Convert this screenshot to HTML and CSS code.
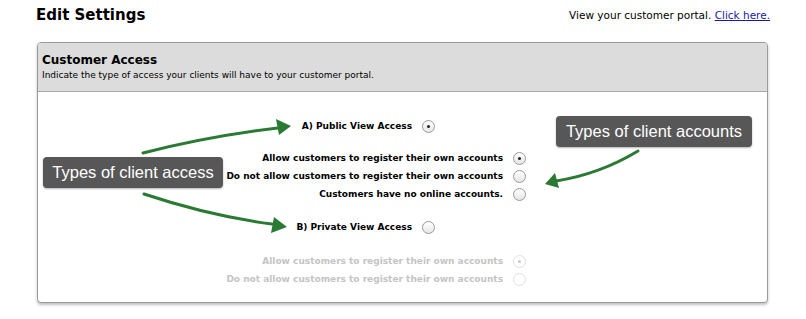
FILE: index.html
```html
<!DOCTYPE html>
<html>
<head>
<meta charset="utf-8">
<link rel="stylesheet" href="styles.css">
</head>
<body>
<div class="page">
  <header class="top">
    <h1 class="title">Edit Settings</h1>
    <p class="portal">View your customer portal. <a href="#">Click here.</a></p>
  </header>
  <section class="panel">
    <div class="panel-head">
      <h2>Customer Access</h2>
      <p>Indicate the type of access your clients will have to your customer portal.</p>
    </div>
    <div class="panel-body">
      <div class="row group first"><span class="lbl">A) Public View Access</span><span class="radio on"></span></div>
      <div class="options">
        <div class="row opt"><span class="lbl">Allow customers to register their own accounts</span><span class="radio on"></span></div>
        <div class="row opt"><span class="lbl">Do not allow customers to register their own accounts</span><span class="radio"></span></div>
        <div class="row opt"><span class="lbl">Customers have no online accounts.</span><span class="radio"></span></div>
      </div>
      <div class="row group second"><span class="lbl">B) Private View Access</span><span class="radio"></span></div>
      <div class="options disabled">
        <div class="row opt"><span class="lbl">Allow customers to register their own accounts</span><span class="radio on"></span></div>
        <div class="row opt"><span class="lbl">Do not allow customers to register their own accounts</span><span class="radio"></span></div>
      </div>
    </div>
  </section>

  <svg class="arrows" width="806" height="319" viewBox="0 0 806 319">
    <g fill="none" stroke="#2a7a34" stroke-width="3" stroke-linecap="round">
      <path d="M143 153 Q210 136 278 128"/>
      <path d="M144 194 Q210 216 272 224"/>
      <path d="M638 151 Q600 174 556 181"/>
    </g>
    <g fill="#2a7a34">
      <path d="M291 126 L276 119 L279 135 Z"/>
      <path d="M287 227 L274 217 L271 233 Z"/>
      <path d="M545 184 L555 173 L559 188 Z"/>
    </g>
  </svg>
  <div class="callout access">Types of client access</div>
  <div class="callout accounts">Types of client accounts</div>
</div>
</body>
</html>
```
FILE: styles.css
```css
html, body { margin: 0; padding: 0; background: #fff; }
.page {
  position: relative;
  width: 806px;
  height: 319px;
  overflow: hidden;
  font-family: "DejaVu Sans", Verdana, sans-serif;
  color: #000;
}
.top {
  display: flex;
  justify-content: space-between;
  align-items: flex-start;
  padding: 5px 36px 0 36px;
  height: 37px;
}
.title {
  margin: 0;
  font-size: 15px;
  font-weight: bold;
  line-height: 20px;
}
.portal {
  margin: 3px 0 0 0;
  font-size: 10.5px;
  line-height: 14px;
}
.portal a { color: #1a1aa6; }
.panel {
  margin-left: 37px;
  width: 729px;
  height: 259px;
  border: 1px solid #9a9a9a;
  border-radius: 4px;
  box-shadow: 0 2px 3px rgba(0,0,0,0.25);
  overflow: hidden;
  background: #fff;
}
.panel-head {
  background: #dcdcdc;
  border-bottom: 1px solid #a8a8a8;
  padding: 9px 4px 0 4px;
  height: 39px;
}
.panel-head h2 {
  margin: 0;
  font-size: 12px;
  line-height: 16px;
  font-weight: bold;
}
.panel-head p {
  margin: 1px 0 0 0;
  font-size: 9px;
  line-height: 13px;
}
.panel-body { padding-top: 25px; }
.row {
  display: flex;
  justify-content: flex-end;
  align-items: center;
  font-size: 9px;
  font-weight: bold;
  height: 18px;
}
.row .lbl { margin-right: 10px; }
.group { width: 397px; }
.opt { width: 488px; }
.first { margin-bottom: 14px; }
.options { margin-bottom: 15px; }
.second { margin-bottom: 16px; }
.radio {
  width: 11px;
  height: 11px;
  border-radius: 50%;
  border: 1px solid #9a9a9a;
  background: linear-gradient(#ffffff, #e6e6e6);
  position: relative;
  flex: none;
}
.radio.on::after {
  content: "";
  position: absolute;
  left: 4px;
  top: 4px;
  width: 3px;
  height: 3px;
  border-radius: 50%;
  background: #222;
}
.disabled .row { color: #c4c4c4; }
.disabled .radio { border-color: #e0e0e0; background: #fff; }
.disabled .radio.on::after { background: #c8c8c8; }
.arrows { position: absolute; left: 0; top: 0; }
.callout {
  position: absolute;
  background: #575757;
  color: #fff;
  border-radius: 4px;
  font-family: "Liberation Sans", Arial, sans-serif;
  font-size: 16.5px;
  line-height: 31px;
  text-align: center;
  box-shadow: 0 1px 2px rgba(0,0,0,0.3);
}
.callout.access { left: 43px; top: 157px; width: 180px; height: 31px; }
.callout.accounts { left: 556px; top: 116px; width: 196px; height: 31px; }
```
